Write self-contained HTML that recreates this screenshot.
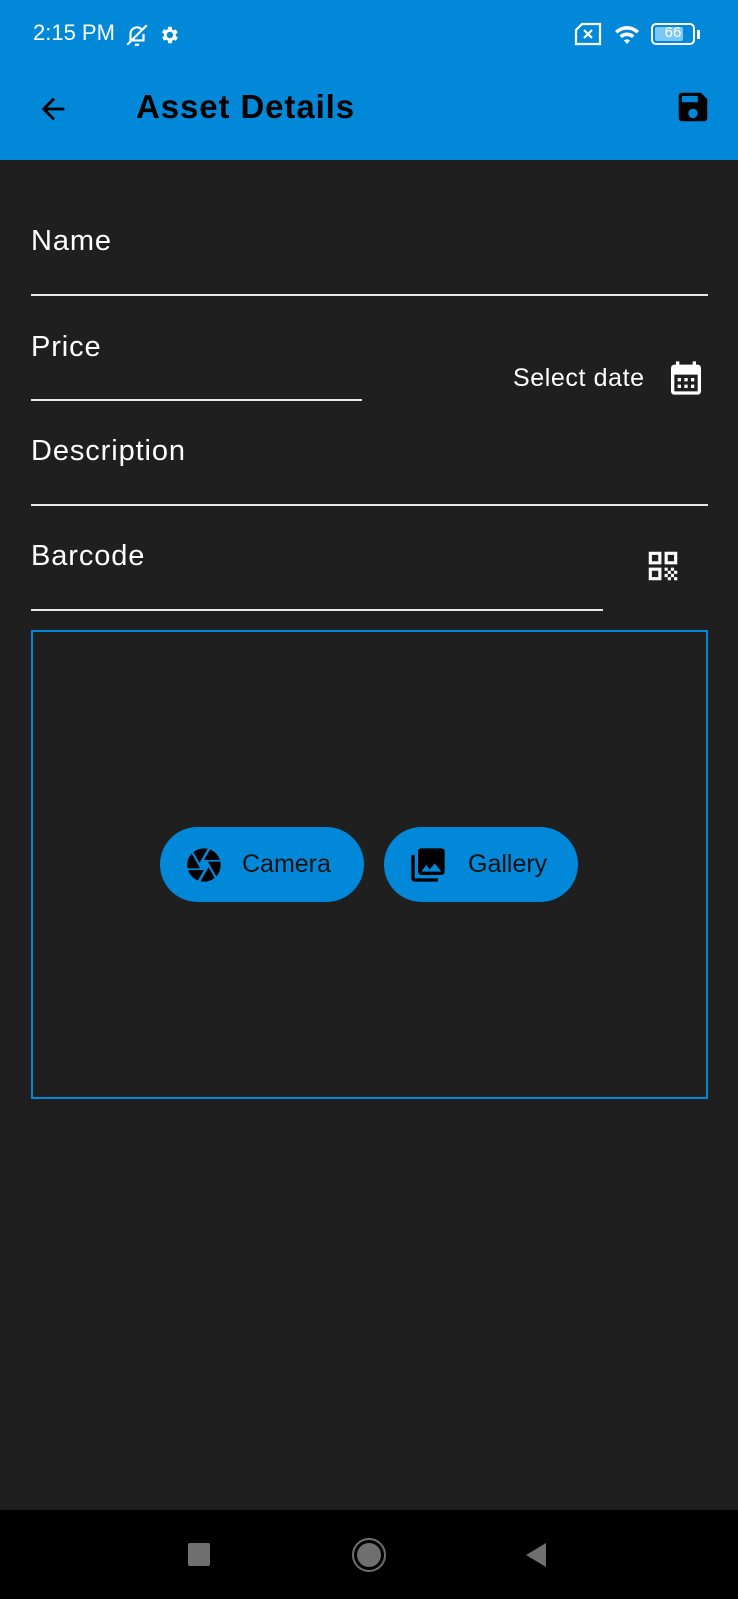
<!DOCTYPE html>
<html><head><meta charset="utf-8"><style>
*{margin:0;padding:0;box-sizing:border-box}
body{width:738px;height:1599px;background:#1f1f1f;font-family:"Liberation Sans",sans-serif;position:relative;overflow:hidden;color:#fff}
.abs{position:absolute}
.bar{left:0;top:0;width:738px;height:160px;background:#0288d8}
.lbl{font-size:29px;color:#fff;left:31px;letter-spacing:0.9px}
.line{height:2px;background:#e8e8e8;left:31px}
.btn{background:#0288d8;border-radius:38px;height:75px;top:827px;color:#111;font-size:25px;display:flex;align-items:center}
</style></head><body>
<div class="abs bar"></div>
<div class="abs" style="left:33px;top:20px;font-size:22px;color:#fff">2:15 PM</div>
<svg class="abs" style="left:124px;top:22px" width="26" height="26" viewBox="0 0 24 24" fill="none" stroke="#fff" stroke-width="2"><path d="M6 17V11a6 6 0 0 1 10-4.5M18 11v6H5M3 21L21 3M10 21h4"/></svg>
<svg class="abs" style="left:158px;top:24px" width="22" height="22" viewBox="0 0 24 24" fill="#fff"><path d="M19.4 13a7.5 7.5 0 0 0 0-2l2.1-1.6-2-3.5-2.5 1a7 7 0 0 0-1.7-1L15 3h-4l-.4 2.7a7 7 0 0 0-1.7 1l-2.5-1-2 3.5L6.6 11a7.5 7.5 0 0 0 0 2l-2.1 1.6 2 3.5 2.5-1a7 7 0 0 0 1.7 1L11 21h4l.4-2.7a7 7 0 0 0 1.7-1l2.5 1 2-3.5zM13 15.5a3.5 3.5 0 1 1 0-7 3.5 3.5 0 0 1 0 7z"/></svg>
<svg class="abs" style="left:574px;top:22px" width="28" height="24" viewBox="0 0 28 24" fill="none" stroke="#fff" stroke-width="2.2"><path d="M8 2h18v20H2V8z"/><path d="M10 8l8 8M18 8l-8 8"/></svg>
<svg class="abs" style="left:612px;top:22px" width="30" height="24" viewBox="0 0 30 24" fill="#fff"><path d="M15 22l-3-3.5a4.5 4.5 0 0 1 6 0z"/><path d="M3 9a17 17 0 0 1 24 0l-2.5 2.5a13.5 13.5 0 0 0-19 0zM7.5 13.5a11 11 0 0 1 15 0L20 16a7.5 7.5 0 0 0-10 0z"/></svg>
<div class="abs" style="left:651px;top:23px;width:44px;height:22px;border:2px solid #fff;border-radius:5px"><div style="position:absolute;left:2px;top:2px;width:28px;height:14px;background:#7cc8f4;border-radius:2px"></div><div style="position:absolute;left:0;top:-1px;width:40px;text-align:center;font-size:15px;color:#fff">66</div></div>
<div class="abs" style="left:697px;top:30px;width:3px;height:9px;background:#fff"></div>
<svg class="abs" style="left:36px;top:92px" width="34" height="34" viewBox="0 0 24 24" fill="#000"><path d="M20 11H7.8l5.6-5.6L12 4l-8 8 8 8 1.4-1.4L7.8 13H20z"/></svg>
<div class="abs" style="left:136px;top:88px;font-size:33px;font-weight:bold;color:#000;letter-spacing:0.9px">Asset Details</div>
<svg class="abs" style="left:674px;top:88px" width="38" height="38" viewBox="0 0 24 24" fill="#000"><path d="M17 3H5a2 2 0 0 0-2 2v14a2 2 0 0 0 2 2h14a2 2 0 0 0 2-2V7zm-5 16a3 3 0 1 1 0-6 3 3 0 0 1 0 6zm3-10H5V5h10z"/></svg>

<div class="abs lbl" style="top:225px">Name</div>
<div class="abs line" style="top:294px;width:677px"></div>
<div class="abs lbl" style="top:331px">Price</div>
<div class="abs line" style="top:399px;width:331px"></div>
<div class="abs" style="left:513px;top:364px;font-size:25px;letter-spacing:0.6px">Select date</div>
<svg class="abs" style="left:666px;top:358px" width="40" height="40" viewBox="0 0 24 24" fill="#fff"><path d="M19 4h-1V2h-2v2H8V2H6v2H5a2 2 0 0 0-2 2v14a2 2 0 0 0 2 2h14a2 2 0 0 0 2-2V6a2 2 0 0 0-2-2zm0 16H5V10h14zM7 12h2v2H7zm4 0h2v2h-2zm4 0h2v2h-2zm-8 4h2v2H7zm4 0h2v2h-2zm4 0h2v2h-2z"/></svg>
<div class="abs lbl" style="top:435px">Description</div>
<div class="abs line" style="top:504px;width:677px"></div>
<div class="abs lbl" style="top:540px">Barcode</div>
<div class="abs line" style="top:609px;width:572px"></div>
<svg class="abs" style="left:644px;top:547px" width="38" height="38" viewBox="0 0 24 24" fill="#fff"><path d="M3 11h8V3H3zm2-6h4v4H5zM3 21h8v-8H3zm2-6h4v4H5zM13 3v8h8V3zm6 6h-4V5h4zM19 19h2v2h-2zM13 13h2v2h-2zM15 15h2v2h-2zM13 17h2v2h-2zM15 19h2v2h-2zM17 17h2v2h-2zM17 13h2v2h-2zM19 15h2v2h-2z"/></svg>

<div class="abs" style="left:31px;top:630px;width:677px;height:469px;border:2px solid #0288d8"></div>
<div class="abs btn" style="left:160px;width:204px">
<svg style="margin-left:24px" width="40" height="40" viewBox="0 0 24 24" fill="#000"><path d="M9.4 10.5l4.8-8.3A10 10 0 0 0 12 2a10 10 0 0 0-6.4 2.3l3.7 6.4zM21.5 9a10 10 0 0 0-5.8-6.3L12 9zm.3 1h-7.5l.3.5 4.8 8.3A10 10 0 0 0 22 12c0-.7-.1-1.4-.2-2zM8.5 12L4.6 5.2A10 10 0 0 0 2.2 14h7.5zm-6 3a10 10 0 0 0 5.8 6.3L12 15zm11.3 0l-3.9 6.8c.7.1 1.4.2 2.1.2a10 10 0 0 0 6.4-2.3l-3.7-6.4z"/></svg>
<span style="margin-left:18px">Camera</span></div>
<div class="abs btn" style="left:384px;width:194px">
<svg style="margin-left:24px" width="40" height="40" viewBox="0 0 24 24" fill="#000"><path d="M22 16V4a2 2 0 0 0-2-2H8a2 2 0 0 0-2 2v12a2 2 0 0 0 2 2h12a2 2 0 0 0 2-2zm-11-4l2 2.7L16 11l4 5H8zM2 6v14a2 2 0 0 0 2 2h14v-2H4V6z"/></svg>
<span style="margin-left:20px">Gallery</span></div>

<div class="abs" style="left:0;top:1510px;width:738px;height:89px;background:#000"></div>
<div class="abs" style="left:188px;top:1543px;width:22px;height:23px;background:#6f6f6f;border-radius:2px"></div>
<div class="abs" style="left:352px;top:1538px;width:34px;height:34px;border:2px solid #6f6f6f;border-radius:50%;padding:3px"><div style="width:100%;height:100%;background:#6f6f6f;border-radius:50%"></div></div>
<svg class="abs" style="left:525px;top:1542px" width="22" height="26" viewBox="0 0 22 26" fill="#6f6f6f"><path d="M21 1v24L1 13z"/></svg>
</body></html>
